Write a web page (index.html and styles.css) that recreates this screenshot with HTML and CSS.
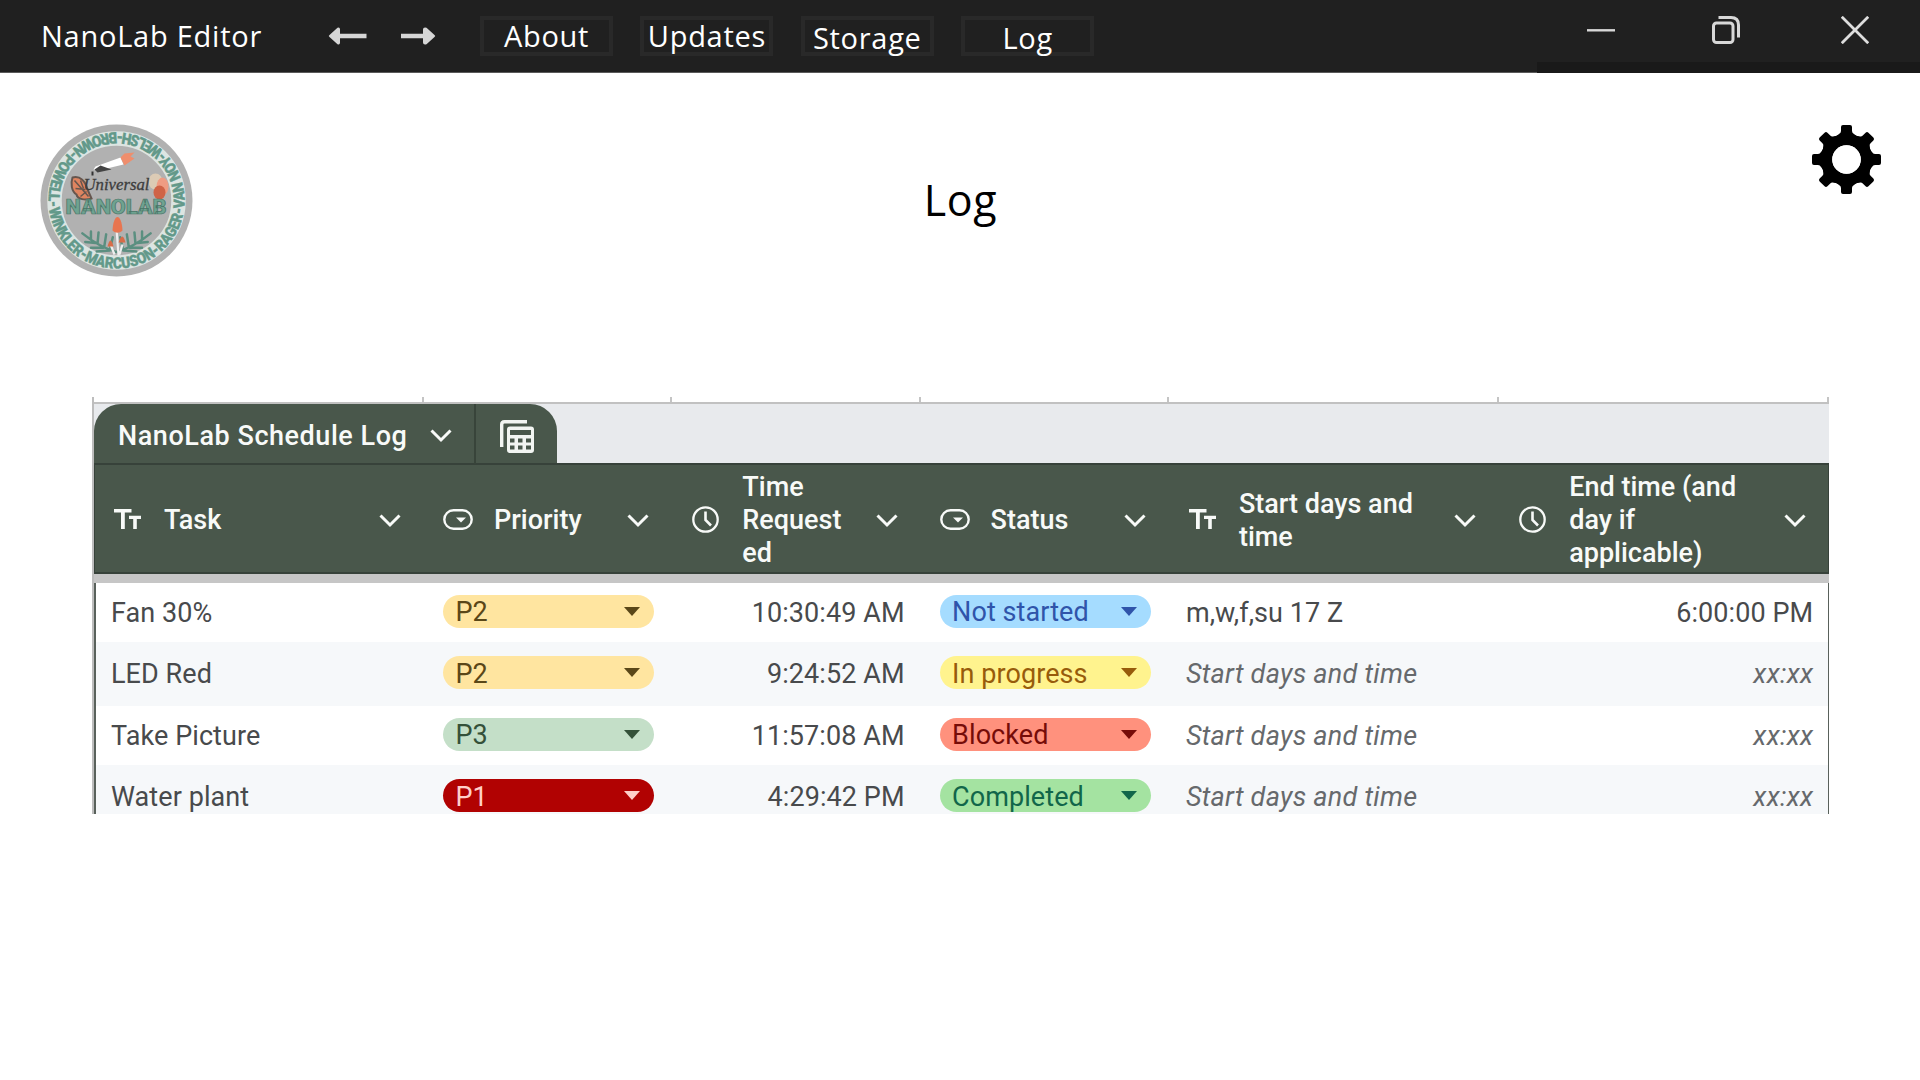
FILE: index.html
```html
<!DOCTYPE html>
<html lang="en">
<head>
<meta charset="utf-8">
<title>NanoLab Editor</title>
<link rel="stylesheet" href="styles.css">
</head>
<body>
<svg class="defs" width="0" height="0" aria-hidden="true">
  <symbol id="chevron" viewBox="0 0 22 14"><path d="M1.500 1.500 11 11 20.500 1.500" fill="none" stroke="currentColor" stroke-width="3"/></symbol>
  <symbol id="text-type" viewBox="0 0 27 21"><path d="M0 0h17.500v3.600h-6.700V20H7V3.600H0zM15 6.700h12v3.300h-4.200v10h-3.600V10H15z" fill="currentColor"/></symbol>
  <symbol id="dropdown" viewBox="0 0 30 21"><rect x="1.300" y="1.300" width="27.400" height="18.400" rx="9.200" fill="none" stroke="currentColor" stroke-width="2.400"/><path d="M13 8.500h10l-5 5z" fill="currentColor"/></symbol>
  <symbol id="clock" viewBox="0 0 27 27"><circle cx="13.500" cy="13.500" r="12.200" fill="none" stroke="currentColor" stroke-width="2.300"/><path d="M13.500 5.500v8.500l5.500 5.500" fill="none" stroke="currentColor" stroke-width="2.600"/></symbol>
  <symbol id="leaf" viewBox="0 0 40 26"><path d="M39 25C25 21 13 14 2 5M31 22 34 9M25 19 27 6M18 15 19 4M11 11 11 3M31 23 17 24M24 20 11 20M16 15 5 14" fill="none" stroke="#5b8f80" stroke-width="2.600" stroke-linecap="round"/></symbol>
</svg>

<header class="titlebar">
  <div class="app-name">NanoLab Editor</div>
  <div class="history">
    <svg width="39" height="18" viewBox="0 0 39 18"><path d="M1.500 8 9.500 .8Q12 0 12 2.500V6.800H38.500v4.400H12v4.300Q12 18 9.500 17.200L1.500 10Q0 9 1.500 8z" fill="#d6d6d6"/></svg>
    <svg width="35" height="18" viewBox="0 0 35 18"><path d="M33.500 8 25.500.8Q22 0 22 2.500V6.800H0v4.400h22v4.300q0 2.500 3.500 1.700L33.500 10q1.500-1 0-2z" fill="#d6d6d6"/></svg>
  </div>
  <nav class="menu">
    <a class="menu-item about">About</a>
    <a class="menu-item updates">Updates</a>
    <a class="menu-item storage low">Storage</a>
    <a class="menu-item log low">Log</a>
  </nav>
  <div class="window-controls">
    <svg width="28" height="28" viewBox="0 0 28 28"><path d="M0 14.300h28" stroke="#d8d8d8" stroke-width="2.400"/></svg>
    <svg class="restore" width="28" height="28" viewBox="0 0 28 28" fill="none" stroke="#d8d8d8" stroke-width="3"><rect x="1.500" y="7" width="19.500" height="19.500" rx="3"/><path d="M6.500 1.500H19q7.500 0 7.500 7.500v12.500"/></svg>
    <svg width="28" height="28" viewBox="0 0 28 28"><path d="M.8.8 27.200 27.200M27.200.8.8 27.200" stroke="#dedede" stroke-width="2.800"/></svg>
  </div>
</header>

<section class="page-head">
  <svg class="logo" width="153" height="153" viewBox="-76.500 -76.500 153 153">
    <defs><path id="ring" d="M-67.500 8.300A68 68 0 0 0 67.500-8.300 68 68 0 0 0-67.500 8.300"/></defs>
    <circle r="76" fill="#b1b1b1"/>
    <circle r="62" fill="none" stroke="#dce5e2" stroke-width="14.500"/>
    <text class="ring-text"><textPath href="#ring" textLength="425" lengthAdjust="spacingAndGlyphs">WINKLER-MARCUSON-RAGER-VAN NOY-WELSH-BROWN-POWELL-</textPath></text>
    <path d="M-21-34 4-43l3 7-25 6-5-1z" fill="#fff"/><path d="M-22-31l6-4 11 4-14 3z" fill="#444"/>
    <path d="M4-43 8-47l10-1-4 4 4 2-10 7z" fill="#ef8e6d"/><path d="M-24-29v4" stroke="#333" stroke-width="2"/>
    <path d="M-44-23c8-2 13 4 15 12l4 9c-6 2-14 1-15-4-5-3-6-11-4-17z" fill="#df8460" stroke="#66564e" stroke-width="2"/>
    <path d="M-42-20l14 16M-41-12l10 1M-36-4l6-5M-36-20l3 8" stroke="#66564e" stroke-width="1.500"/>
    <ellipse cx="39" cy="-19" rx="7" ry="8" fill="#dccbb5"/><ellipse cx="46" cy="-14" rx="6" ry="9" fill="#ef9c83"/><ellipse cx="43" cy="-8" rx="6" ry="7" fill="#cf6347"/>
    <text class="logo-script" x="-33" y="-11" textLength="66" lengthAdjust="spacingAndGlyphs">Universal</text>
    <text class="logo-name" x="-51" y="13.500" textLength="101" lengthAdjust="spacingAndGlyphs">NANOLAB</text>
    <use href="#leaf" x="-36" y="28" width="38" height="25"/>
    <use href="#leaf" x="-36" y="28" width="38" height="25" transform="scale(-1 1)"/>
    <path d="M0 28l2 27M-6 44l4 10M6 44 3 54" stroke="#eee" stroke-width="2.200" fill="none"/>
    <path d="M-4 30C-3 12 5 12 6 30 3 33-1 33-4 30z" fill="#e87550"/><path d="M-9 46q3-12 6 0zM2 42q4-12 7 0z" fill="#d86c49"/>
  </svg>
  <h1 class="page-title">Log</h1>
  <svg class="gear" width="69" height="69" viewBox="-34.500 -34.500 69 69">
    <defs><path id="tooth" d="M-5.500-32.500q0-2 2-2h7q2 0 2 2v4q0 2 2 3L12-22-12-22-7.500-25.500q2-1 2-3z"/></defs>
    <use href="#tooth"/><use href="#tooth" transform="rotate(45)"/><use href="#tooth" transform="rotate(90)"/><use href="#tooth" transform="rotate(135)"/><use href="#tooth" transform="rotate(180)"/><use href="#tooth" transform="rotate(225)"/><use href="#tooth" transform="rotate(270)"/><use href="#tooth" transform="rotate(315)"/>
    <circle r="20" fill="none" stroke="#000" stroke-width="11.500"/>
    <circle r="14.300" fill="#fff"/>
  </svg>
</section>

<main class="sheet">
  <div class="ticks cols"><i></i><i></i><i></i><i></i><i></i><i></i></div>
  <div class="tab-strip">
    <div class="tab">
      <div class="tab-title"><span>NanoLab Schedule Log</span><svg class="chevron"><use href="#chevron"/></svg></div>
      <div class="tab-tool">
        <svg width="34" height="34" viewBox="0 0 34 34"><path d="M1.700 27V4.500q0-2.800 2.800-2.800H27" fill="none" stroke="#f2f5f2" stroke-width="3.400"/><path fill-rule="evenodd" fill="#f2f5f2" d="M10 6.500h21q3 0 3 3V30q0 3-3 3H10q-3 0-3-3V9.500q0-3 3-3zM10 10v5h21v-5zM10 18.500v4h4.500v-4zM18 18.500v4h4.500v-4zM26 18.500v4h5v-4zM10 25.500v4h4.500v-4zM18 25.500v4h4.500v-4zM26 25.500v4h5v-4z"/></svg>
      </div>
    </div>
  </div>
  <div class="head cols">
    <div class="th"><svg class="kind text"><use href="#text-type"/></svg><span>Task</span><svg class="chevron"><use href="#chevron"/></svg></div>
    <div class="th"><svg class="kind pick"><use href="#dropdown"/></svg><span>Priority</span><svg class="chevron"><use href="#chevron"/></svg></div>
    <div class="th"><svg class="kind time"><use href="#clock"/></svg><span>Time<br>Request<br>ed</span><svg class="chevron"><use href="#chevron"/></svg></div>
    <div class="th"><svg class="kind pick"><use href="#dropdown"/></svg><span>Status</span><svg class="chevron"><use href="#chevron"/></svg></div>
    <div class="th"><svg class="kind text"><use href="#text-type"/></svg><span>Start days and<br>time</span><svg class="chevron"><use href="#chevron"/></svg></div>
    <div class="th"><svg class="kind time"><use href="#clock"/></svg><span>End time (and<br>day if<br>applicable)</span><svg class="chevron"><use href="#chevron"/></svg></div>
  </div>
  <div class="freeze-bar"></div>
  <div class="rows">
    <div class="row cols"><div class="td">Fan 30%</div><div class="td"><div class="chip p2">P2</div></div><div class="td num">10:30:49 AM</div><div class="td"><div class="chip not-started">Not started</div></div><div class="td">m,w,f,su 17 Z</div><div class="td num">6:00:00 PM</div></div>
    <div class="row cols"><div class="td">LED Red</div><div class="td"><div class="chip p2">P2</div></div><div class="td num">9:24:52 AM</div><div class="td"><div class="chip in-progress">In progress</div></div><div class="td hint">Start days and time</div><div class="td num hint">xx:xx</div></div>
    <div class="row cols"><div class="td">Take Picture</div><div class="td"><div class="chip p3">P3</div></div><div class="td num">11:57:08 AM</div><div class="td"><div class="chip blocked">Blocked</div></div><div class="td hint">Start days and time</div><div class="td num hint">xx:xx</div></div>
    <div class="row cols"><div class="td">Water plant</div><div class="td"><div class="chip p1">P1</div></div><div class="td num">4:29:42 PM</div><div class="td"><div class="chip completed">Completed</div></div><div class="td hint">Start days and time</div><div class="td num hint">xx:xx</div></div>
  </div>
</main>
</body>
</html>
```
FILE: styles.css
```css
* { box-sizing: border-box; }
body { margin: 0; width: 1920px; height: 1080px; overflow: hidden; background: #fff; font-family: "Open Sans", sans-serif; }
svg { display: block; flex: none; }
.defs { position: absolute; }

.titlebar { display: flex; align-items: flex-start; height: 73px; background: #202020; border-bottom: 1px solid #5a5a5a; color: #fff; font-size: 29px; line-height: 40px; }
.app-name { width: 286px; margin: 16px 0 0 41px; letter-spacing: 0.75px; white-space: nowrap; }
.history { display: flex; gap: 34px; width: 153px; margin-top: 27px; padding-left: 1px; }
.menu { display: flex; gap: 27.400px; margin-top: 16px; }
.menu-item { display: flex; justify-content: center; width: 133px; height: 40px; border: 4px solid #292929; line-height: 32px; white-space: nowrap; letter-spacing: 0.7px; }
.low { line-height: 36px; }
.window-controls { display: flex; justify-content: space-between; width: 383px; height: 73px; margin-left: auto; padding: 16px 51px 0 50px; border-bottom: 11px solid #191919; }
.restore { margin-right: 4px; }

.page-head { display: grid; grid-template-columns: 1fr auto 1fr; height: 324px; padding: 51px 39px 0 40px; }
.page-title { margin: 46px 0 0; color: #000; font-size: 43px; font-weight: 400; line-height: 60px; letter-spacing: 0.6px; }
.gear { margin-top: 1px; justify-self: end; }
.ring-text { font: 900 15.500px Roboto, sans-serif; fill: #63998a; stroke: #63998a; stroke-width: 0.4px; }
.logo-script { font: italic 17px "Liberation Serif", serif; fill: #3d3d3d; stroke: #3d3d3d; stroke-width: 0.3px; }
.logo-name { font: 900 19.500px Roboto, sans-serif; fill: #6fa391; stroke: #4b7568; stroke-width: 0.7px; }

.sheet { width: 1737px; height: 417px; margin-left: 92px; overflow: hidden; border-left: 2px solid #bdbdbd; font-family: Roboto, sans-serif; font-size: 27px; line-height: 32.700px; }
.cols { display: grid; grid-template-columns: 330px 248.300px 248.300px 248.300px 330.300px 330px; }
.ticks { height: 6.500px; border-bottom: 2.500px solid #c1c1c1; }
.ticks i { border-right: 2px solid #c4c4c4; }
.tab-strip { height: 59.500px; background: #e8eaed; }
.tab { display: flex; width: 463px; height: 60px; background: #49574b; border-radius: 27px 27px 0 0; color: #f8faf8; }
.tab-title { display: flex; align-items: center; justify-content: space-between; width: 382px; padding: 6px 22px 0 24px; border-right: 2px solid #38443a; font-weight: 500; letter-spacing: 0.55px; white-space: nowrap; }
.tab-title .chevron { margin-top: -1px; }
.tab-tool { flex: 1; padding: 16px 0 0 24px; }
.chevron { width: 22px; height: 14px; }
.head { height: 111px; background: #49574b; border: solid #37423a; border-width: 2px 1px 2px; color: #f8faf8; font-weight: 500; }
.th { display: flex; align-items: center; padding: 4px 24px 0 19px; white-space: nowrap; }
.th span { flex: 1; }
.th .chevron { margin-top: 1px; }
.kind { margin-top: -3px; }
.kind.text { width: 27px; height: 21px; margin-right: 23px; }
.kind.pick { width: 30px; height: 21px; margin: -3px 21px 0 -1px; }
.kind.time { width: 27px; height: 27px; margin-right: 23px; }
.freeze-bar { height: 8.500px; background: #c6c6c6; }
.rows { border: solid #59615b; border-width: 0 1.500px 0 2px; color: #484a4c; }
.row { height: 59px; background: #fff; }
.row:nth-child(even) { height: 64px; background: #f6f8fa; }
.td { display: flex; align-items: center; padding: 2px 18px 0 15px; letter-spacing: 0.08px; white-space: nowrap; }
.num { justify-content: flex-end; }
.hint { font-style: italic; letter-spacing: 0.27px; color: #66696c; }
.chip { display: flex; align-items: center; justify-content: space-between; flex: none; width: 211px; height: 33px; margin: -4px 0 0 2px; padding: 3px 14px 0 12.500px; border-radius: 17px; }
.chip::after { content: ""; margin-top: -3px; border: solid transparent; border-width: 9px 8px 0; border-top-color: currentColor; }
.p2 { background: #ffe5a0; color: #5a4718; }
.p3 { background: #c4dfc8; color: #345139; }
.p1 { background: #b10202; color: #ffcfc9; }
.not-started { background: #a5dcff; color: #2f54aa; }
.in-progress { background: #fff38e; color: #975b0b; }
.blocked { background: #ff917d; color: #760c08; }
.completed { background: #a4e3a1; color: #11664a; }
```
